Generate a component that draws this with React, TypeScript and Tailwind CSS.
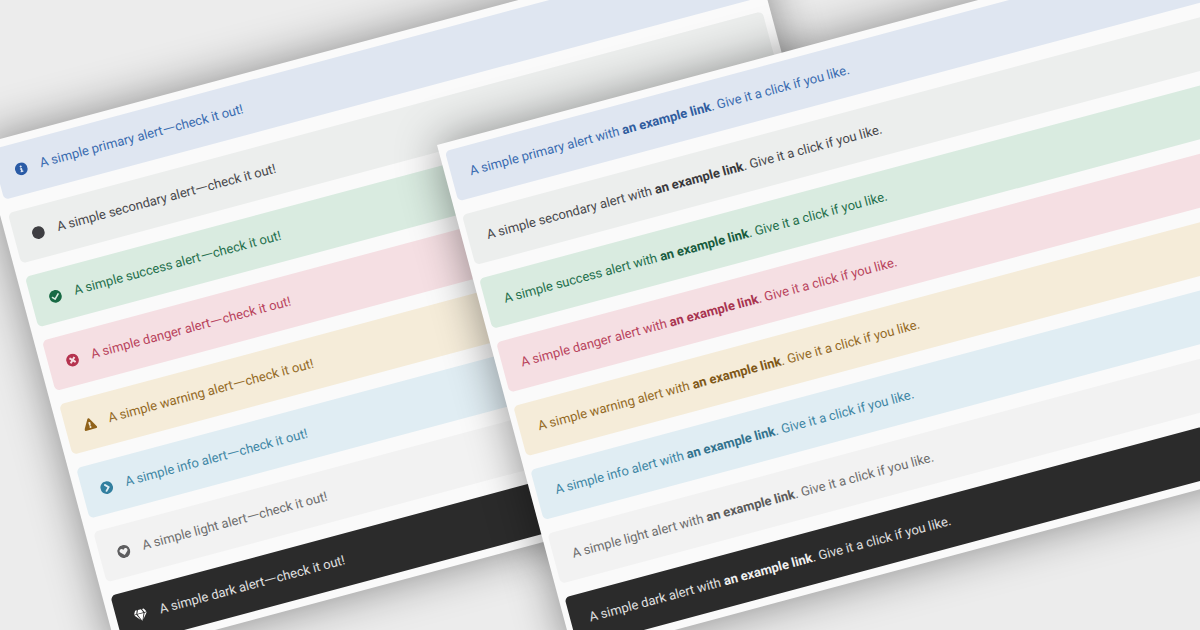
import React from 'react';
import { FaInfoCircle, FaCircle, FaCheckCircle, FaTimesCircle, FaExclamationTriangle, FaChevronCircleRight, FaGem } from 'react-icons/fa';

const HeartCircle = () => (
    <svg viewBox="0 0 16 16" className="w-[13px] h-[13px]">
        <circle cx="8" cy="8" r="8" fill="currentColor" />
        <path d="M8 12.6 3.5 8.2C2.3 6.8 3.2 4.4 5.2 4.4c1.2 0 2.2.7 2.8 1.7.6-1 1.6-1.7 2.8-1.7 2 0 2.9 2.4 1.7 3.8z" fill="#f2f2f2" />
    </svg>
);

const alerts = [
    { name: 'primary', bg: 'bg-[#dfe6f1]', text: 'text-[#3a6cb0]', link: 'text-[#2f5c9e]', icon: <FaInfoCircle size={13} className="text-[#2a5ba6]" /> },
    { name: 'secondary', bg: 'bg-[#eceeed]', text: 'text-[#48484c]', link: 'text-[#38383b]', icon: <FaCircle size={13} className="text-[#3e3e42]" /> },
    { name: 'success', bg: 'bg-[#d9ebe0]', text: 'text-[#25704d]', link: 'text-[#185c3e]', icon: <FaCheckCircle size={13} className="text-[#186a44]" /> },
    { name: 'danger', bg: 'bg-[#f5dfe3]', text: 'text-[#b9445d]', link: 'text-[#a83450]', icon: <FaTimesCircle size={13} className="text-[#b5334f]" /> },
    { name: 'warning', bg: 'bg-[#f5ecd9]', text: 'text-[#946a26]', link: 'text-[#7f5818]', icon: <FaExclamationTriangle size={13} className="text-[#90621a]" /> },
    { name: 'info', bg: 'bg-[#e0edf3]', text: 'text-[#3f87a5]', link: 'text-[#33738e]', icon: <FaChevronCircleRight size={13} className="text-[#327f9f]" /> },
    { name: 'light', bg: 'bg-[#f2f2f2]', text: 'text-[#6e6e6e]', link: 'text-[#5c5c5c]', icon: <HeartCircle /> },
    { name: 'dark', bg: 'bg-[#2b2b2b]', text: 'text-[#e0e0e0]', link: 'text-[#f0f0f0]', icon: <FaGem size={13} className="text-white" /> },
];

const App: React.FC = () => {
    return (
        <div className="relative w-[1200px] h-[630px] overflow-hidden bg-[#ececec] font-['Roboto',sans-serif] text-[13px] leading-[20px]">
            {/* Icon alerts */}
            <div className="absolute left-[-19px] top-[144px] w-[797px] origin-top-left -rotate-15 bg-[#fafafa] shadow-[0_0_45px_rgba(0,0,0,0.42)] p-2 flex flex-col gap-[14px]">
                {alerts.map(a => (
                    <div key={a.name} className={`h-[52px] rounded-[5px] px-[18px] flex items-center gap-[13px] ${a.bg} ${a.text}`}>
                        <span className="w-[13px] shrink-0 flex justify-center text-[#5e5e60]">{a.icon}</span>
                        <span>A simple {a.name} alert<span className="inline-block w-[13px] origin-left scale-x-[1.3]">—</span>check it out!</span>
                    </div>
                ))}
            </div>

            {/* Link alerts */}
            <div className="absolute left-[437px] top-[145px] w-[900px] origin-top-left -rotate-15 bg-[#fafafa] shadow-[0_0_45px_rgba(0,0,0,0.42)] py-2 pl-[6px] pr-2 flex flex-col gap-[14px]">
                {alerts.map(a => (
                    <div key={a.name} className={`h-[52px] rounded-[5px] px-[19px] flex items-center ${a.bg} ${a.text}`}>
                        <span>A simple {a.name} alert with <a className={`font-bold ${a.link}`}>an example link</a>. Give it a click if you like.</span>
                    </div>
                ))}
            </div>
        </div>
    );
};

export default App;
